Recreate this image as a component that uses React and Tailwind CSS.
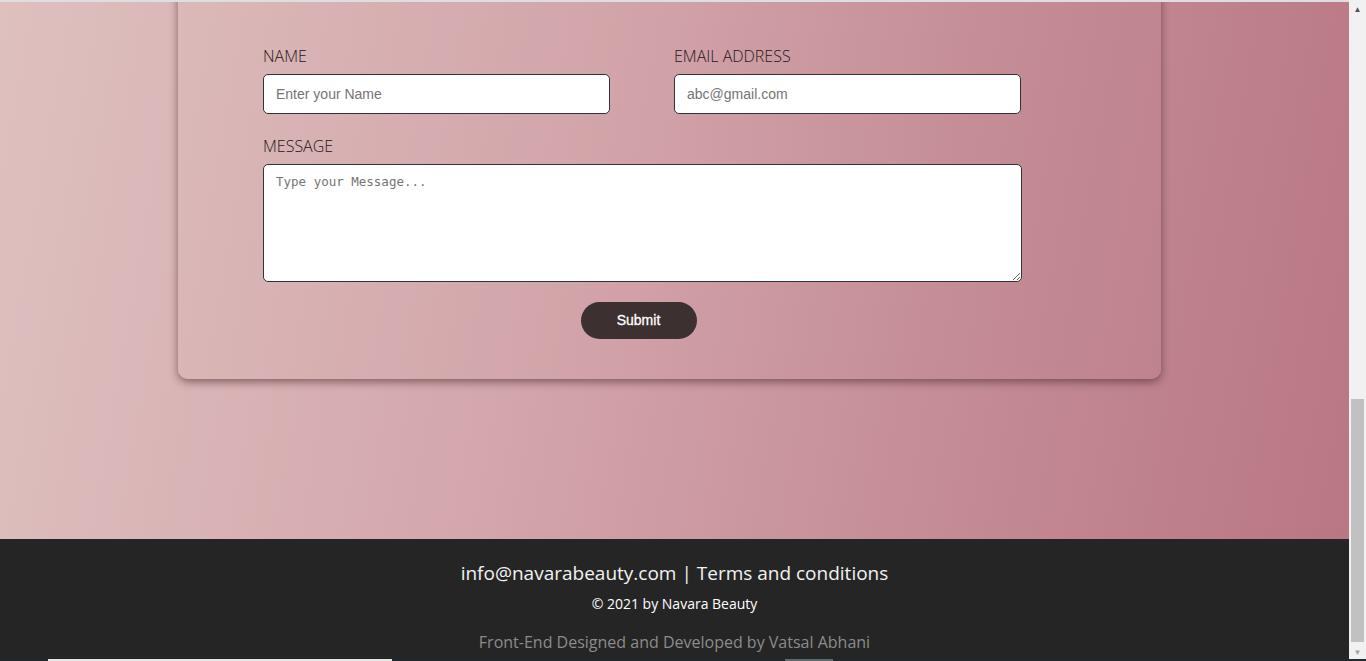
import React, { useState } from 'react';

const Contact = () => {
  const [name, setName] = useState("");
  const [email, setEmail] = useState("");
  const [message, setMessage] = useState("");

  const handleSubmit = (e) => {
    e.preventDefault();
  };

  return (
    <div className="h-[537px] bg-[linear-gradient(100deg,#dec0bf_0%,#d3a6ab_40%,#c58d96_70%,#b87783_100%)]">
      <div className="ml-[178px] w-[983px] -mt-[20px] rounded-[10px] bg-[linear-gradient(100deg,#dbb9b9_0%,#d1a3a8_45%,#c48c95_80%,#bf838d_100%)] shadow-[0_3px_8px_rgba(60,30,35,0.55)] pt-[64px] pb-[40px] px-[85px]">
        <form onSubmit={handleSubmit} className="w-[759px]">
          <div className="grid grid-cols-[347px_347px] gap-x-[64px]">
            <div>
              <label className="block text-[16px] font-light text-[#24161a] leading-[20px] mb-[8px] font-['Open_Sans',sans-serif]">NAME</label>
              <input
                type="text"
                placeholder="Enter your Name"
                value={name}
                onChange={(e) => setName(e.target.value)}
                className="w-full h-[40px] bg-white border border-[#333] rounded-[5px] px-[12px] text-[14px] placeholder-[#757575] outline-none font-['Liberation_Sans',Arial,sans-serif]"
              />
            </div>
            <div>
              <label className="block text-[16px] font-light text-[#24161a] leading-[20px] mb-[8px] font-['Open_Sans',sans-serif]">EMAIL ADDRESS</label>
              <input
                type="email"
                placeholder="abc@gmail.com"
                value={email}
                onChange={(e) => setEmail(e.target.value)}
                className="w-full h-[40px] bg-white border border-[#333] rounded-[5px] px-[12px] text-[14px] placeholder-[#757575] outline-none font-['Liberation_Sans',Arial,sans-serif]"
              />
            </div>
          </div>
          <label className="block mt-[22px] text-[16px] font-light text-[#24161a] leading-[20px] mb-[8px] font-['Open_Sans',sans-serif]">MESSAGE</label>
          <textarea
            placeholder="Type your Message..."
            value={message}
            onChange={(e) => setMessage(e.target.value)}
            className="block w-[759px] h-[118px] bg-white border border-[#333] rounded-[5px] px-[12px] py-[8px] text-[12.5px] placeholder-[#757575] outline-none font-['DejaVu_Sans_Mono',monospace]"
          />
          <div className="flex justify-center mt-[20px] pr-[8px]">
            <button
              type="submit"
              className="w-[116px] h-[37px] rounded-full bg-[#3d3031] text-white text-[14px] font-normal [-webkit-text-stroke:0.3px_white] font-['Liberation_Sans',Arial,sans-serif]"
            >
              Submit
            </button>
          </div>
        </form>
      </div>
    </div>
  );
};

const Footer = () => (
  <footer className="h-[120px] bg-[#252525] flex flex-col items-center pt-[22px] font-['Open_Sans',sans-serif]">
    <p className="text-[19px] leading-[24px] text-[#f2f2f2]">info@navarabeauty.com | Terms and conditions</p>
    <p className="mt-[10px] text-[14px] leading-[18px] text-white">© 2021 by Navara Beauty</p>
    <p className="mt-[19px] text-[16px] leading-[20px] text-[#8c8c8c]">Front-End Designed and Developed by Vatsal Abhani</p>
  </footer>
);

const Scrollbar = () => (
  <div className="w-[17px] h-[659px] bg-[#f1f1f1] flex flex-col items-center">
    <div className="h-[17px] flex items-center justify-center text-[#505050] text-[8px] leading-none">▲</div>
    <div className="flex-1 w-full flex flex-col justify-end pb-[2px]">
      <div className="mx-[2px] h-[243px] bg-[#c1c1c1]" />
    </div>
    <div className="h-[15px] flex items-center justify-center text-[#a3a3a3] text-[8px] leading-none">▼</div>
  </div>
);

export default function App() {
  return (
    <div className="w-[1366px] h-[661px] overflow-hidden flex flex-col bg-white">
      <div className="flex h-[659px]">
        <div className="w-[1349px] flex flex-col overflow-hidden">
          <div className="h-[2px] bg-[#dedede] relative z-10" />
          <Contact />
          <Footer />
        </div>
        <Scrollbar />
      </div>
      <div className="h-[2px] bg-[#1d2a32] flex">
        <div className="ml-[48px] w-[344px] bg-[#e8e8e8]" />
        <div className="ml-[393px] w-[48px] bg-[#5a6a72]" />
      </div>
    </div>
  );
}
